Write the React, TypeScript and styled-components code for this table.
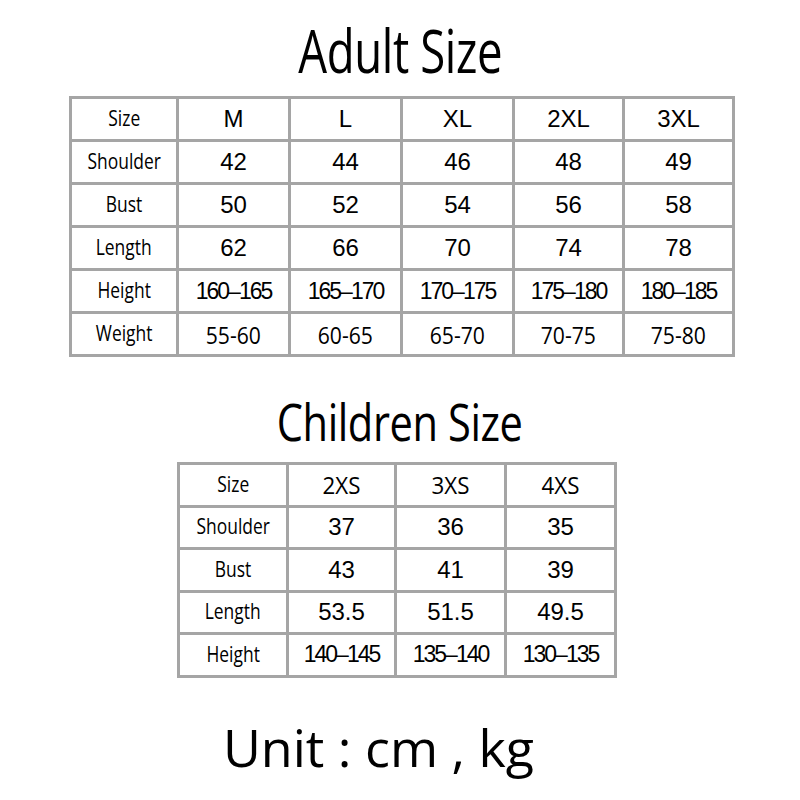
import * as React from "react";
import styled, { createGlobalStyle } from "styled-components";

type Kind = "label" | "plain" | "range" | "soft" | "head";

interface ICell {
  text: string;
  kind: Kind;
}

const cells = (kind: Kind, list: string[]): ICell[] => list.map(text => ({ text, kind }));

const adultRows: ICell[][] = [
  [{ text: "Size", kind: "label" }, ...cells("plain", ["M", "L", "XL", "2XL", "3XL"])],
  [{ text: "Shoulder", kind: "label" }, ...cells("plain", ["42", "44", "46", "48", "49"])],
  [{ text: "Bust", kind: "label" }, ...cells("plain", ["50", "52", "54", "56", "58"])],
  [{ text: "Length", kind: "label" }, ...cells("plain", ["62", "66", "70", "74", "78"])],
  [{ text: "Height", kind: "label" }, ...cells("range", ["160–165", "165–170", "170–175", "175–180", "180–185"])],
  [{ text: "Weight", kind: "label" }, ...cells("soft", ["55-60", "60-65", "65-70", "70-75", "75-80"])]
];

const childRows: ICell[][] = [
  [{ text: "Size", kind: "label" }, ...cells("head", ["2XS", "3XS", "4XS"])],
  [{ text: "Shoulder", kind: "label" }, ...cells("plain", ["37", "36", "35"])],
  [{ text: "Bust", kind: "label" }, ...cells("plain", ["43", "41", "39"])],
  [{ text: "Length", kind: "label" }, ...cells("plain", ["53.5", "51.5", "49.5"])],
  [{ text: "Height", kind: "label" }, ...cells("range", ["140–145", "135–140", "130–135"])]
];

const sizes: Record<Kind, number> = { label: 21, plain: 24, range: 23, soft: 24, head: 23 };
const scales: Record<Kind, number> = { label: 0.83, plain: 1, range: 1, soft: 0.88, head: 0.97 };

const SizeTable: React.FC<{ rows: ICell[][]; cols: string; shift: number; rowH: number }> = ({
  rows,
  cols,
  shift,
  rowH
}) => (
  <Grid $cols={cols} $shift={shift} $rowH={rowH}>
    {rows.map((row, r) =>
      row.map((cell, c) => (
        <Cell key={`${r}-${c}`}>
          <Value $kind={cell.kind}>{cell.text}</Value>
        </Cell>
      ))
    )}
  </Grid>
);

const App: React.FC = () => {
  return (
    <>
      <GlobalStyle />
      <Page>
        <Title>Adult Size</Title>
        <SizeTable rows={adultRows} cols="104px 109px 109px 109px 107px 107px" shift={4} rowH={40} />
        <ChildTitle>Children Size</ChildTitle>
        <SizeTable rows={childRows} cols="106px 105px 107px 107px" shift={-6} rowH={39.5} />
        <Unit>Unit : cm , kg</Unit>
      </Page>
    </>
  );
};

export default App;

const GlobalStyle = createGlobalStyle`
  body {
    margin: 0;
    background: #ffffff;
  }
`;

const Page = styled.div`
  width: 800px;
  height: 800px;
  display: flex;
  flex-direction: column;
  align-items: center;
  color: #000;
  font-family: "Open Sans", "Noto Sans", sans-serif;
`;

const Title = styled.h1`
  margin: 20px 0 16px;
  font-size: 60px;
  line-height: 60px;
  font-weight: 400;
  transform: scaleX(0.76);
  letter-spacing: -0.5px;
`;

const ChildTitle = styled(Title)`
  margin: 38px 0 15px;
  font-size: 52px;
  line-height: 52px;
  transform: scaleX(0.8);
`;

const Grid: any = styled.div<{ $cols: string; $shift: number; $rowH: number }>`
  display: grid;
  grid-template-columns: ${p => p.$cols};
  grid-auto-rows: ${p => p.$rowH}px;
  gap: 3px;
  padding: 3px;
  background: #a5a5a5;
  margin-left: ${p => (p.$shift > 0 ? p.$shift : 0)}px;
  margin-right: ${p => (p.$shift < 0 ? -p.$shift : 0)}px;
`;

const Cell = styled.div`
  background: #ffffff;
  display: flex;
  align-items: center;
  justify-content: center;
  overflow: hidden;
`;

const Value: any = styled.span<{ $kind: Kind }>`
  display: inline-block;
  white-space: nowrap;
  font-family: ${p =>
    p.$kind === "plain" || p.$kind === "range"
      ? `"Liberation Sans", Arial, sans-serif`
      : `"Open Sans", "Noto Sans", sans-serif`};
  font-size: ${p => sizes[p.$kind as Kind]}px;
  letter-spacing: ${p => (p.$kind === "range" ? "-2px" : "0")};
  transform: scaleX(${p => scales[p.$kind as Kind]});
  margin-top: ${p => (p.$kind === "label" ? "-2px" : "0")};
`;

const Unit = styled.div`
  margin-top: 43px;
  padding-right: 43px;
  font-size: 52px;
  line-height: 52px;
  font-weight: 400;
`;
